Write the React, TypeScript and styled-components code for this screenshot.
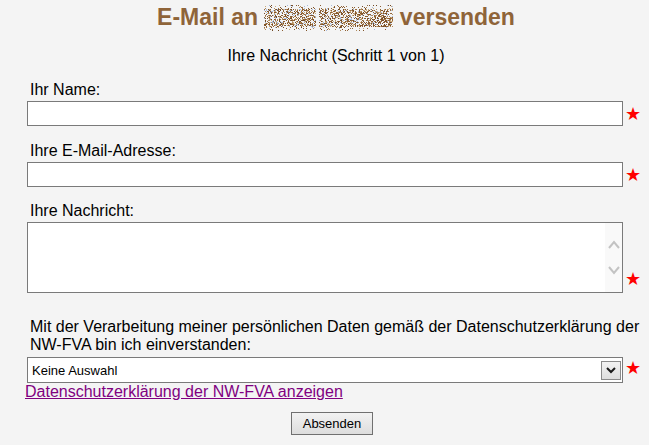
import React, { useMemo } from "react";
import styled, { createGlobalStyle } from "styled-components";

const GlobalStyle = createGlobalStyle`
  html, body {
    margin: 0;
    padding: 0;
    background: #f4f4f4;
    font-family: "Liberation Sans", Arial, sans-serif;
    color: #000;
  }
`;

const Page = styled.div`
  width: 618px;
  padding-left: 27px;
`;

const Title = styled.h1`
  margin: 4px 0 0;
  font-size: 23px;
  line-height: 26px;
  font-weight: bold;
  color: #8f6439;
  text-align: center;
  white-space: nowrap;
`;

const Blur = styled.svg`
  display: inline-block;
  vertical-align: -6px;
`;

const Subtitle = styled.div`
  margin-top: 16px;
  font-size: 16px;
  line-height: 18px;
  text-align: center;
`;

const Field = styled.div<{ $top: number }>`
  margin-top: ${(p) => p.$top}px;
`;

const Label = styled.label`
  display: block;
  padding-left: 3px;
  font-size: 16px;
  line-height: 18px;
  margin-bottom: 2px;
`;

const FieldRow = styled.div`
  display: flex;
  align-items: flex-end;
`;

const TextInput = styled.input`
  box-sizing: border-box;
  width: 596px;
  height: 25px;
  margin: 0;
  border: 1px solid #7a7a7a;
  background: #fff;
  outline: none;
  font-family: "Liberation Sans", Arial, sans-serif;
  font-size: 13px;
`;

const Star = styled.span<{ $lift: number }>`
  margin-left: 2px;
  margin-bottom: ${(p) => p.$lift}px;
  font-family: "DejaVu Sans", sans-serif;
  font-size: 18px;
  line-height: 18px;
  color: #ff0000;
`;

const TextAreaBox = styled.div`
  box-sizing: border-box;
  display: flex;
  width: 596px;
  height: 71px;
  border: 1px solid #7a7a7a;
  background: #fff;
`;

const TextArea = styled.textarea`
  flex: 1;
  margin: 0;
  border: none;
  outline: none;
  resize: none;
  background: transparent;
  font-family: "Liberation Sans", Arial, sans-serif;
  font-size: 13px;
`;

const ScrollCol = styled.div`
  width: 17px;
  background: #f9f9f9;
  display: flex;
  flex-direction: column;
  align-items: center;
  padding-top: 17px;
  gap: 17px;
`;

const Consent = styled.div`
  margin-top: 25px;
  padding-left: 3px;
  font-size: 16px;
  line-height: 18px;
`;

const SelectRow = styled(FieldRow)`
  margin-top: 3px;
`;

const SelectBox = styled.div`
  box-sizing: border-box;
  display: flex;
  align-items: center;
  width: 596px;
  height: 26px;
  padding: 0 1px 0 4px;
  border: 1px solid #7a7a7a;
  background: #fff;
`;

const Select = styled.select`
  flex: 1;
  appearance: none;
  -webkit-appearance: none;
  border: none;
  outline: none;
  background: transparent;
  padding: 0;
  margin: 0;
  font-family: "Liberation Sans", Arial, sans-serif;
  font-size: 13px;
  color: #000;
`;

const ArrowButton = styled.div`
  box-sizing: border-box;
  width: 20px;
  height: 19px;
  border: 1px solid #8a8a8a;
  background: linear-gradient(#f2f2f2, #dedede);
  display: flex;
  align-items: center;
  justify-content: center;
`;

const PrivacyLink = styled.a`
  display: inline-block;
  margin-left: -2px;
  font-size: 16px;
  line-height: 18px;
  color: #800080;
  text-decoration: underline;
`;

const ButtonRow = styled.div`
  width: 610px;
  display: flex;
  justify-content: center;
  margin-top: 11px;
`;

const SubmitButton = styled.button`
  box-sizing: border-box;
  width: 82px;
  height: 23px;
  padding: 0;
  border: 1px solid #707070;
  border-radius: 0;
  background: linear-gradient(#f2f2f2, #dddddd);
  font-family: "Liberation Sans", Arial, sans-serif;
  font-size: 13px;
  color: #000;
`;

function mulberry32(a: number) {
  return function () {
    a |= 0;
    a = (a + 0x6d2b79f5) | 0;
    let t = Math.imul(a ^ (a >>> 15), 1 | a);
    t = (t + Math.imul(t ^ (t >>> 7), 61 | t)) ^ t;
    return ((t ^ (t >>> 14)) >>> 0) / 4294967296;
  };
}

const NoiseName: React.FC = () => {
  const rects = useMemo(() => {
    const rnd = mulberry32(12345);
    const out: { x: number; y: number; c: string }[] = [];
    const colors = ["#7f532a", "#8b5e33", "#9a6d3e", "#8b5e33", "#b08a5c", "#c9a97b", "#a9bcdc", "#6f4824"];
    const words: [number, number][] = [
      [0, 52],
      [55, 129],
    ];
    for (const [x0, x1] of words) {
      for (let x = x0; x < x1; x++) {
        for (let y = 0; y < 26; y++) {
          const core = y >= 4 && y <= 21;
          const d = core ? 0.55 : 0.15;
          if (rnd() < d) {
            out.push({ x, y, c: colors[Math.floor(rnd() * colors.length)] });
          }
        }
      }
    }
    return out;
  }, []);
  return (
    <Blur width="129" height="26" viewBox="0 0 129 26" aria-hidden="true">
      {rects.map((r, i) => (
        <rect key={i} x={r.x} y={r.y} width="1" height="1" fill={r.c} />
      ))}
    </Blur>
  );
};

const ChevronUp = () => (
  <svg width="12" height="9" viewBox="0 0 12 9">
    <polyline points="1,8 6,2 11,8" fill="none" stroke="#c3c3c3" strokeWidth="2" />
  </svg>
);

const ChevronDown = () => (
  <svg width="12" height="9" viewBox="0 0 12 9">
    <polyline points="1,1 6,7 11,1" fill="none" stroke="#c3c3c3" strokeWidth="2" />
  </svg>
);

const SelectChevron = () => (
  <svg width="10" height="7" viewBox="0 0 10 7">
    <polyline points="1,1 5,5 9,1" fill="none" stroke="#1a1a1a" strokeWidth="2" />
  </svg>
);

export default function App() {
  return (
    <>
      <GlobalStyle />
      <Page>
        <Title>
          E-Mail an <NoiseName /> versenden
        </Title>
        <Subtitle>Ihre Nachricht (Schritt 1 von 1)</Subtitle>

        <Field $top={16}>
          <Label htmlFor="name">Ihr Name:</Label>
          <FieldRow>
            <TextInput id="name" type="text" />
            <Star $lift={3}>★</Star>
          </FieldRow>
        </Field>

        <Field $top={16}>
          <Label htmlFor="mail">Ihre E-Mail-Adresse:</Label>
          <FieldRow>
            <TextInput id="mail" type="text" />
            <Star $lift={3}>★</Star>
          </FieldRow>
        </Field>

        <Field $top={15}>
          <Label htmlFor="msg">Ihre Nachricht:</Label>
          <FieldRow>
            <TextAreaBox>
              <TextArea id="msg" />
              <ScrollCol>
                <ChevronUp />
                <ChevronDown />
              </ScrollCol>
            </TextAreaBox>
            <Star $lift={5}>★</Star>
          </FieldRow>
        </Field>

        <Consent>
          Mit der Verarbeitung meiner persönlichen Daten gemäß der Datenschutzerklärung der NW-FVA bin ich
          einverstanden:
        </Consent>
        <SelectRow>
          <SelectBox>
            <Select defaultValue="none">
              <option value="none">Keine Auswahl</option>
              <option value="ja">Ja</option>
            </Select>
            <ArrowButton>
              <SelectChevron />
            </ArrowButton>
          </SelectBox>
          <Star $lift={6}>★</Star>
        </SelectRow>
        <PrivacyLink href="#">Datenschutzerklärung der NW-FVA anzeigen</PrivacyLink>
        <ButtonRow>
          <SubmitButton type="button">Absenden</SubmitButton>
        </ButtonRow>
      </Page>
    </>
  );
}
